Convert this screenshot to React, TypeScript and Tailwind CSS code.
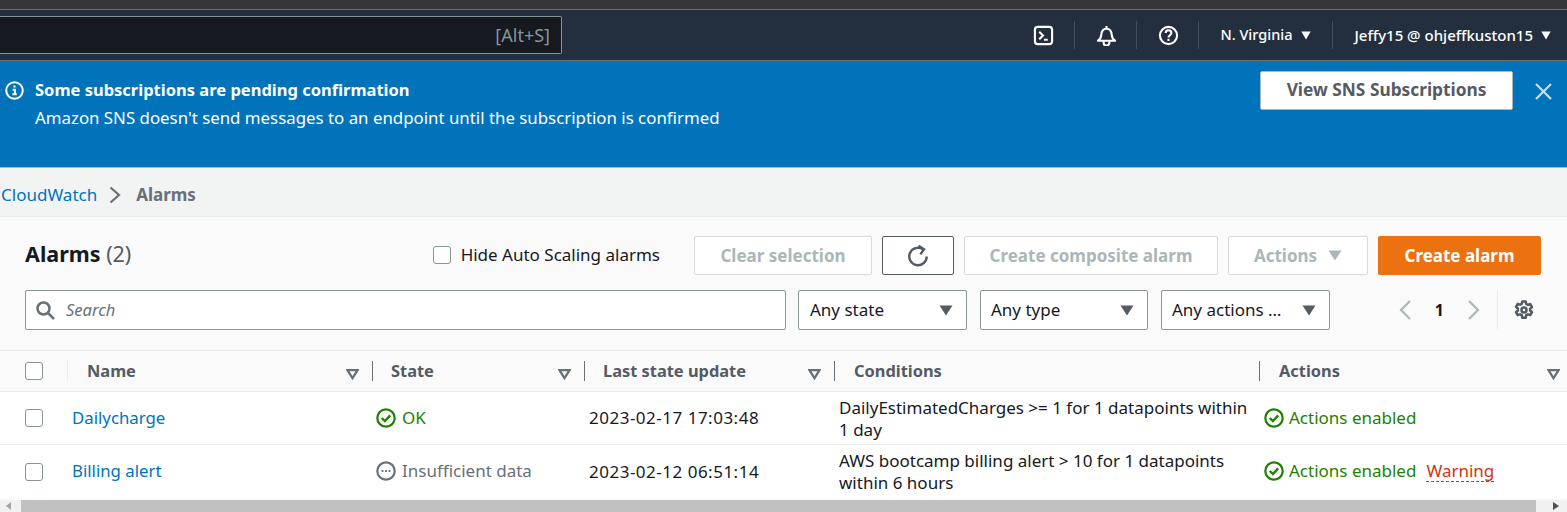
import React from "react";

const F = "[font-family:'Noto_Sans','Open_Sans',sans-serif]";

const Caret = ({ c = "#545b64", w = 14, h = 11 }: { c?: string; w?: number; h?: number }) => (
  <svg width={w} height={h} viewBox="0 0 14 11" preserveAspectRatio="none"><path d="M0.5 0.5h13L7 10.5z" fill={c} /></svg>
);

const SortIcon = () => (
  <svg width="13" height="11" viewBox="0 0 13 11" className="shrink-0">
    <path d="M1.5 1.2h10L6.5 9.2z" fill="none" stroke="#687078" strokeWidth="2.2" />
  </svg>
);

const Check = () => (
  <span className="block w-[18px] h-[18px] rounded-[3px] border-[1.5px] border-[#879596] bg-white shrink-0" />
);

const OkIcon = () => (
  <svg width="20" height="20" viewBox="0 0 20 20" className="shrink-0">
    <circle cx="10" cy="10" r="8.7" fill="none" stroke="#1d8102" strokeWidth="2.2" />
    <path d="M5.8 10l3.1 3 5.300-5.600" fill="none" stroke="#1d8102" strokeWidth="2.300" />
  </svg>
);

const PendingIcon = () => (
  <svg width="20" height="20" viewBox="0 0 20 20" className="shrink-0">
    <circle cx="10" cy="10" r="8.7" fill="none" stroke="#687078" strokeWidth="2.2" />
    <path d="M5.600 9h1.800v1.900H5.600zM9.100 9h1.800v1.900H9.100zM12.600 9h1.800v1.900h-1.800z" fill="#687078" />
  </svg>
);

const DisabledBtn = ({ children, w }: { children: React.ReactNode; w: string }) => (
  <div className={`${w} h-[39px] flex items-center justify-center gap-[11px] border border-[#d5dbdb] rounded-[2px] bg-white text-[#aab7b8] text-[17px] font-bold`}>
    {children}
  </div>
);

const Select = ({ label, w, pl }: { label: string; w: string; pl: string }) => (
  <div className={`${w} ${pl} h-[40px] flex items-center justify-between pr-[13px] bg-white border border-[#879596] rounded-[2px] text-[17px] text-[#16191f]`}>
    <span>{label}</span>
    <Caret />
  </div>
);

const NavSep = () => <span className="block w-px h-[28px] bg-[#414d5c]" />;

const HeadCell = ({ label, w, pad = "pl-[19px]", sort = true, sep = "bg-[#687078]", mr = "mr-[13px]" }: { label: string; w: string; pad?: string; sort?: boolean; sep?: string; mr?: string }) => (
  <div className={`${w} h-full flex items-center relative ${pad}`}>
    <span className={`absolute left-0 top-[10px] h-[20px] w-px ${sep}`} />
    <span className="text-[16.400px] font-bold text-[#545b64]">{label}</span>
    {sort && <span className={`ml-auto ${mr} mt-[6px]`}><SortIcon /></span>}
  </div>
);

const Enabled = () => (
  <span className="flex items-center gap-[5px] text-[#1d8102]"><OkIcon />Actions enabled</span>
);

function Row({ name, state, date, cond, actions, border, nudge }: { name: string; state: React.ReactNode; date: string; cond: React.ReactNode; actions: React.ReactNode; border?: boolean; nudge: string }) {
  return (
    <div className={`h-[53px] shrink-0 flex items-center bg-white text-[17px] text-[#16191f] ${border ? "border-b border-[#eaeded]" : ""}`}>
      <div className="w-[68px] pl-[25px] flex"><Check /></div>
      <div className={`w-[308px] pl-[4px] text-[#0073bb] text-[16.800px] ${nudge}`}>{name}</div>
      <div className={`w-[213px] ${nudge}`}>{state}</div>
      <div className="w-[250px] tracking-[0.5px]">{date}</div>
      <div className={`w-[425px] leading-[22px] ${border ? "mt-px" : ""}`}>{cond}</div>
      <div className={`flex-1 ${nudge}`}>{actions}</div>
    </div>
  );
}

export default function App() {
  return (
    <div className={`w-[1567px] h-[512px] overflow-hidden flex flex-col bg-[#f2f3f3] ${F}`}>
      <div className="h-[9px] bg-[#35363a] shrink-0" />
      <div className="h-[52px] shrink-0 bg-[#232f3e] border-y border-[#687078] flex items-center pr-[16px]">
        <div className="w-[562px] h-[38px] bg-[#16191f] border border-l-0 border-[#879596] rounded-r-[2px] flex items-center justify-end pr-[11px] text-[18px] text-[#879596]">[Alt+S]</div>
        <div className="ml-auto flex items-center text-white">
          <svg width="21" height="21" viewBox="0 0 22 22" fill="none" stroke="#fff" strokeWidth="2.200">
            <rect x="2" y="2" width="18" height="18" rx="3" />
            <path d="M6.500 7l4 4-4 4M11.500 15.500h4" />
          </svg>
          <span className="ml-[20px]"><NavSep /></span>
          <svg className="ml-[21px]" width="21" height="21" viewBox="0 0 22 22" fill="none" stroke="#fff" strokeWidth="2.200">
            <path d="M2 16.500c2.500-1.500 3.200-3 3.500-6C5.800 6.500 8 4 11 4s5.200 2.500 5.500 6.500c.3 3 1 4.500 3.500 6z" strokeLinejoin="round" />
            <path d="M11 1v3M8 17v1.500a3 3 0 0 0 6 0V17" />
          </svg>
          <span className="ml-[19px]"><NavSep /></span>
          <svg className="ml-[21px]" width="21" height="21" viewBox="0 0 22 22" fill="none" stroke="#fff" strokeWidth="2.200">
            <circle cx="11" cy="11" r="9" />
            <path d="M8 8.500c0-1.800 1.300-3 3-3s3 1.200 3 2.800c0 2.400-3 2.400-3 4.700M11 14.500v2.200" />
          </svg>
          <span className="ml-[19px]"><NavSep /></span>
          <span className="ml-[21px] text-[14.500px] font-medium">N. Virginia</span>
          <span className="ml-[9px]"><Caret c="#fff" w={10} h={9} /></span>
          <span className="ml-[21px]"><NavSep /></span>
          <span className="ml-[21px] text-[15px] font-medium">Jeffy15 @ ohjeffkuston15</span>
          <span className="ml-[8px]"><Caret c="#fff" w={10} h={9} /></span>
        </div>
      </div>

      <div className="h-[107px] shrink-0 bg-[#0073bb] border-b border-[#aab7b8] flex items-start text-white">
        <svg className="ml-[5px] mt-[20px] shrink-0" width="19" height="19" viewBox="0 0 19 19" fill="none" stroke="#fff" strokeWidth="2">
          <circle cx="9.500" cy="9.500" r="8.300" />
          <path d="M9.500 4.600v2M7.600 8.700h2.300v4.500M7.400 13.300h4.300" />
        </svg>
        <div className="ml-[11px] mt-[15px] text-[16.850px] leading-[28px]">
          <div className="font-bold text-[16.500px]">Some subscriptions are pending confirmation</div>
          <div>Amazon SNS doesn't send messages to an endpoint until the subscription is confirmed</div>
        </div>
        <div className="ml-auto mt-[10px] w-[253px] h-[39px] pb-[2px] bg-white border border-[#aab7b8] rounded-[2px] flex items-center justify-center text-[17.300px] font-bold text-[#545b64]">View SNS Subscriptions</div>
        <svg className="ml-[22px] mr-[15px] mt-[22px]" width="17" height="17" viewBox="0 0 17 17" fill="none" stroke="#d5dbdb" strokeWidth="2.200">
          <path d="M1 1l15 15M16 1L1 16" />
        </svg>
      </div>

      <div className="h-[48px] shrink-0 flex items-center pl-px pt-[6px] text-[17px]">
        <span className="text-[#0073bb]">CloudWatch</span>
        <svg className="ml-[12px]" width="12" height="18" viewBox="0 0 12 18" fill="none" stroke="#687078" strokeWidth="2.200"><path d="M1.500 1.500L10 9l-8.500 7.500" /></svg>
        <span className="ml-[15px] font-bold text-[#687078]">Alarms</span>
      </div>

      <div className="flex-1 flex flex-col bg-[#fafafa] border-t border-[#eaeded] min-h-0">
        <div className="h-[133px] shrink-0 pl-[25px] pr-[26px] flex flex-col">
          <div className="h-[39px] mt-[19px] flex items-center">
            <span className="text-[21.500px] font-bold text-[#16191f] -mt-[3px]">Alarms <span className="font-normal text-[#545b64]">(2)</span></span>
            <span className="ml-auto flex items-center gap-[10px] text-[17px] text-[#16191f] -mt-px"><Check />Hide Auto Scaling alarms</span>
            <div className="ml-[34px] flex gap-[10px]">
              <DisabledBtn w="w-[178px]">Clear selection</DisabledBtn>
              <div className="w-[72px] h-[39px] flex items-center justify-center bg-white border border-[#545b64] rounded-[2px]">
                <svg width="24" height="24" viewBox="0 0 22 22" fill="none" stroke="#545b64" strokeWidth="2.200">
                  <path d="M15.500 4.800A8 8 0 1 0 19 11.500" />
                  <path d="M11.500 1.500l5 3.300-3.300 4.700" />
                </svg>
              </div>
              <DisabledBtn w="w-[254px]">Create composite alarm</DisabledBtn>
              <DisabledBtn w="w-[140px]">Actions <Caret c="#aab7b8" /></DisabledBtn>
              <div className="w-[163px] h-[39px] flex items-center justify-center bg-[#ec7211] rounded-[2px] text-white text-[17px] font-bold">Create alarm</div>
            </div>
          </div>
          <div className="mt-[15px] flex items-center pr-[7px]">
            <div className="w-[761px] h-[40px] flex items-center bg-white border border-[#879596] rounded-[2px] pl-[10px] gap-[11px]">
              <svg width="19" height="19" viewBox="0 0 19 19" fill="none" stroke="#687078" strokeWidth="2.500"><circle cx="7.500" cy="7.500" r="6" /><path d="M12 12l6 6" /></svg>
              <span className="italic text-[16.500px] text-[#687078]">Search</span>
            </div>
            <span className="ml-[12px]"><Select label="Any state" w="w-[169px]" pl="pl-[11px]" /></span>
            <span className="ml-[13px]"><Select label="Any type" w="w-[168px]" pl="pl-[10px]" /></span>
            <span className="ml-[13px]"><Select label="Any actions …" w="w-[169px]" pl="pl-[10px]" /></span>
            <div className="ml-auto flex items-center h-[40px]">
              <svg width="14" height="22" viewBox="0 0 14 22" fill="none" stroke="#aab7b8" strokeWidth="2.200"><path d="M12 2L3 11l9 9" /></svg>
              <span className="mx-[23px] text-[16px] font-bold text-[#16191f]">1</span>
              <svg width="14" height="22" viewBox="0 0 14 22" fill="none" stroke="#aab7b8" strokeWidth="2.200"><path d="M2 2l9 9-9 9" /></svg>
              <span className="ml-[16px] w-px h-[40px] bg-[#eaeded]" />
              <svg className="ml-[16px]" width="20" height="20" viewBox="0 0 20 20" fill="none" stroke="#545b64" strokeWidth="2.500">
                <path d="M8.300 1.500h3.400l.5 2.500 1.700.9 2.400-.9 1.700 3-1.900 1.700v1.800l1.900 1.700-1.700 3-2.400-.9-1.700.9-.5 2.500H8.300l-.5-2.500-1.700-.9-2.400.9-1.700-3 1.900-1.700V8.500L2 6.800l1.700-3 2.400.9 1.700-.9z" strokeLinejoin="round" />
                <circle cx="10" cy="10" r="2.500" />
              </svg>
            </div>
          </div>
        </div>

        <div className="h-[42px] shrink-0 flex items-center border-y border-[#eaeded] bg-[#fafafa]">
          <div className="w-[67px] pl-[25px] flex"><Check /></div>
          <HeadCell label="Name" w="w-[305px]" pad="pl-[20px]" sep="bg-[#eaeded]" />
          <HeadCell label="State" w="w-[212px]" pad="pl-[19px]" />
          <HeadCell label="Last state update" w="w-[250px]" pad="pl-[19px]" />
          <HeadCell label="Conditions" w="w-[425px]" pad="pl-[20px]" sort={false} />
          <HeadCell label="Actions" w="w-[308px]" pad="pl-[20px]" mr="mr-[7px]" />
        </div>

        <Row border nudge="" name="Dailycharge" state={<span className="flex items-center gap-[6px] text-[#1d8102]"><OkIcon />OK</span>} date="2023-02-17 17:03:48" cond={<>DailyEstimatedCharges &gt;= 1 for 1 datapoints within<br />1 day</>} actions={<Enabled />} />
        <Row nudge="-mt-px" name="Billing alert" state={<span className="flex items-center gap-[6px] text-[#687078]"><PendingIcon />Insufficient data</span>} date="2023-02-12 06:51:14" cond={<>AWS bootcamp billing alert &gt; 10 for 1 datapoints<br />within 6 hours</>} actions={<span className="flex items-center gap-[10px]"><Enabled /><span className="text-[#d13212] border-b border-dashed border-[#d13212] leading-[21px]">Warning</span></span>} />

        <div className="h-[2px] shrink-0 bg-[#fafafa]" />
        <div className="flex-1 bg-[#f1f1f1] flex items-center">
          <svg className="ml-[6px]" width="6" height="8" viewBox="0 0 6 8"><path d="M5 0v8L0 4z" fill="#a3a3a3" /></svg>
          <div className="ml-[9px] w-[1515px] h-full bg-[#c1c1c1]" />
          <svg className="ml-[17px]" width="6" height="8" viewBox="0 0 6 8"><path d="M0 0v8l6-4z" fill="#505050" /></svg>
        </div>
      </div>
    </div>
  );
}
